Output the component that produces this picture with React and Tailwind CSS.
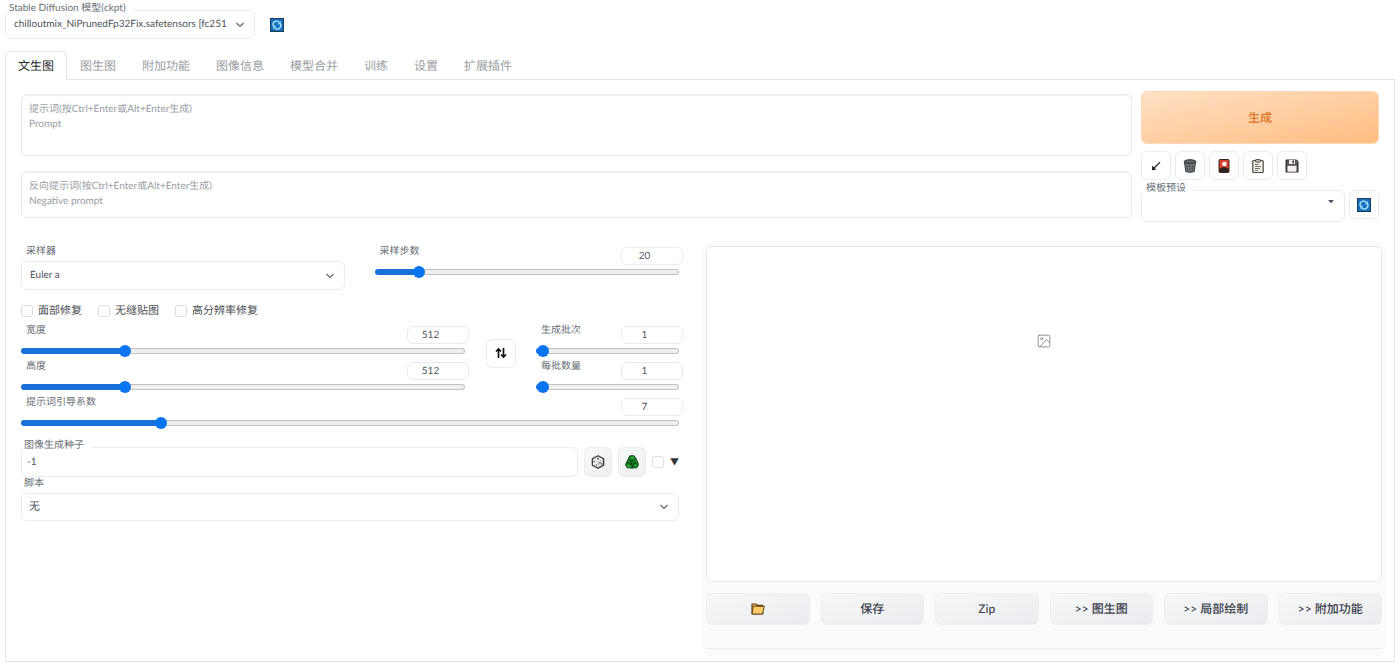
import { useState } from "react";

const TABS = ["文生图", "图生图", "附加功能", "图像信息", "模型合并", "训练", "设置", "扩展插件"];

function Chevron() {
  return (
    <svg viewBox="0 0 10 10" className="pointer-events-none absolute top-1/2 right-2.5 size-2.5 -translate-y-1/2" fill="none" stroke="#62666c" strokeWidth="1.200">
      <path d="M1.500 3L5 6.500 8.500 3" />
    </svg>
  );
}

function Caret() {
  return (
    <svg viewBox="0 0 8 8" className="pointer-events-none absolute top-2 right-2.5 size-2" fill="#4b5563">
      <path d="M1 2h6L4 5.200z" />
    </svg>
  );
}

function RefreshIcon() {
  return (
    <svg viewBox="0 0 14 14" className="size-3.5">
      <rect x="0.500" y="0.500" width="13" height="13" fill="#1470bd" stroke="#1d3a55" />
      <g fill="none" stroke="#9fdcff" strokeWidth="1.500">
        <path d="M3.600 8.300A3.500 3.500 0 0 1 9.300 4.300" />
        <path d="M10.400 5.700A3.500 3.500 0 0 1 4.700 9.700" />
      </g>
      <path d="M10.800 2.800v3.400H7.600zM3.200 11.200V7.800h3.200z" fill="#9fdcff" />
    </svg>
  );
}

function ArrowIcon() {
  return (
    <svg viewBox="0 0 14 14" className="size-3.5">
      <path d="M11 3.200L5.200 9" stroke="#222" strokeWidth="1.200" fill="none" />
      <path d="M3.200 6.600l4.200 4.200-4.500.4z" fill="#222" />
    </svg>
  );
}

function TrashIcon() {
  return (
    <svg viewBox="0 0 14 14" className="size-3.5">
      <path d="M1.500 3l1.300 9.600q4.200 1.500 8.400 0L12.500 3z" fill="#7d8587" stroke="#2f3436" />
      <path d="M4 5l.8 7.500M7 5v8M10 5l-.8 7.500M2.500 7.500h9M3 10h8" stroke="#434a4c" strokeWidth="0.700" />
      <ellipse cx="7" cy="2.600" rx="5.800" ry="1.900" fill="#5d6567" stroke="#2f3436" />
    </svg>
  );
}

function CardIcon() {
  return (
    <svg viewBox="0 0 14 14" className="size-3.5">
      <rect x="2" y="0.500" width="10" height="13" rx="1" fill="#d9432f" stroke="#49201c" />
      <path d="M2.500 9.500Q7 6.500 11.500 9.500V13h-9z" fill="#2a2324" />
      <circle cx="7.500" cy="5" r="2.300" fill="#fff1e8" />
    </svg>
  );
}

function ClipboardIcon() {
  return (
    <svg viewBox="0 0 14 14" className="size-3.5">
      <rect x="1.800" y="1.500" width="10.400" height="12" rx="1" fill="#f2efe6" stroke="#4a4844" strokeWidth="1.200" />
      <rect x="4.500" y="0.500" width="5" height="2.600" rx="0.600" fill="#b8b5ae" stroke="#3c3a36" strokeWidth="0.800" />
      <path d="M4 5.500h3.500M4 7.500h6M4 9.500h5M4 11.300h3" stroke="#66635d" strokeWidth="0.900" />
    </svg>
  );
}

function FloppyIcon() {
  return (
    <svg viewBox="0 0 14 14" className="size-3.5">
      <path d="M1 1h10.500L13 2.500V13H1z" fill="#5b5558" stroke="#2a2628" />
      <rect x="4" y="1" width="6" height="4" fill="#eceaea" />
      <rect x="7.500" y="1.500" width="1.500" height="2.800" fill="#3b3638" />
      <rect x="2.500" y="6.800" width="9" height="5.900" fill="#f6f1f2" />
    </svg>
  );
}

function DiceIcon() {
  return (
    <svg viewBox="0 0 14 14" className="size-3.5" strokeLinejoin="round">
      <path d="M7 .8l5.700 3v6.400L7 13.200l-5.700-3V3.800z" fill="#f4f4f4" />
      <path d="M7 7l5.500-3v6L7 13z" fill="#d8d8d8" />
      <path d="M1.500 4L7 7l5.500-3M7 7v6" fill="none" stroke="#b5b5b5" strokeWidth="0.700" />
      <path d="M7 .8l5.700 3v6.400L7 13.200l-5.700-3V3.800z" fill="none" stroke="#2d2d2d" strokeWidth="1.200" />
      <g fill="#333">
        <circle cx="7" cy="3.700" r="0.900" />
        <circle cx="3.200" cy="6.800" r="0.700" />
        <circle cx="5.200" cy="10" r="0.700" />
        <circle cx="9" cy="8" r="0.700" />
        <circle cx="11" cy="9" r="0.700" />
      </g>
    </svg>
  );
}

function RecycleIcon() {
  return (
    <svg viewBox="0 0 14 14" className="size-3.5" strokeLinejoin="round">
      <path d="M4.800.8h4.400l2 3.200 2.300 5.600-1.700 3.200H8l-1 .7-1-.7H2.200L.5 9.600 2.500 5.500z" fill="#1a8526" stroke="#0a4511" strokeWidth="1" />
      <path d="M4.300 4.800L7 6.300l3.200-2.600M7 6.300L6 9.400l2 1.400M2.200 7.200l3.800 2.200M8 12.500V9.200l3.500-1.600" fill="none" stroke="#08380e" strokeWidth="1" />
      <path d="M6 2.400h2.300l.9 1.400M2.300 10.200l1 1.200h1.800M10.600 9.800l-.8 1.500" fill="none" stroke="#35b545" strokeWidth="1.200" />
    </svg>
  );
}

function FolderIcon() {
  return (
    <svg viewBox="0 0 14 12" className="h-3 w-3.5" strokeLinejoin="round" stroke="#5a3f16" strokeWidth="1.200">
      <path d="M1 11V1h4l1.200 1.300h5.600V11z" fill="#f0b552" />
      <path d="M1.200 11L2.200 3.300h11.200L11.500 11z" fill="#fbcb6a" strokeWidth="0.900" />
    </svg>
  );
}

function SwapIcon() {
  return (
    <svg viewBox="0 0 12 12" className="size-3" fill="none" stroke="#111" strokeWidth="1.700">
      <path d="M3.500 11V2M1 4.500L3.500 2 6 4.500" />
      <path d="M8.500 1v9M6 7.500L8.500 10 11 7.500" />
    </svg>
  );
}

function ImageIcon() {
  return (
    <svg viewBox="0 0 24 24" className="size-3.5" fill="none" stroke="#8d9096" strokeWidth="1.700" strokeLinecap="round" strokeLinejoin="round">
      <rect x="2" y="2" width="20" height="20" rx="2" />
      <circle cx="8" cy="8" r="1.800" />
      <path d="M22 15l-5.500-5.500L4.500 22" />
    </svg>
  );
}

function Slider({ id, label, min, max, initial }) {
  const [value, setValue] = useState(initial);
  const ratio = (value - min) / (max - min);
  const stop = `calc(6px + (100% - 12px) * ${ratio})`;
  const track = `linear-gradient(to right, #1a6fd8 ${stop}, transparent ${stop}) border-box, linear-gradient(#efefef, #efefef) padding-box, linear-gradient(#c2c2c2, #c2c2c2) border-box`;
  const change = (e) => setValue(Number(e.target.value));
  return (
    <div>
      <div className="flex items-start justify-between pl-[5px]">
        <label htmlFor={id} className="leading-[10px] text-[#6b6f76]">{label}</label>
        <input
          type="number"
          aria-label={label}
          value={value}
          onChange={change}
          className="mt-px h-[18px] w-[62px] rounded-md border border-[#ebebed] bg-white pb-px text-center leading-[15px] text-[#55585e]"
        />
      </div>
      <div className="mt-px mr-1 flex">
        <input
          id={id}
          type="range"
          min={min}
          max={max}
          value={value}
          onChange={change}
          style={{ "--track": track }}
          className="h-3 w-full appearance-none bg-transparent [&::-webkit-slider-runnable-track]:h-[6px] [&::-webkit-slider-runnable-track]:rounded-full [&::-webkit-slider-runnable-track]:border [&::-webkit-slider-runnable-track]:border-transparent [&::-webkit-slider-runnable-track]:[background:var(--track)] [&::-webkit-slider-thumb]:-mt-1 [&::-webkit-slider-thumb]:size-3 [&::-webkit-slider-thumb]:appearance-none [&::-webkit-slider-thumb]:rounded-full [&::-webkit-slider-thumb]:bg-[#0a75f0]"
        />
      </div>
    </div>
  );
}

const CHECKBOX =
  "size-3 appearance-none rounded-[3px] border border-[#dddee1] bg-white checked:bg-[#0a75f0]";

function Check({ label }) {
  return (
    <label className="flex items-center gap-[5px] text-[11px] leading-4 text-[#4b4e54]">
      <input type="checkbox" className={CHECKBOX} />
      {label}
    </label>
  );
}

function ToolButton({ label, children }) {
  return (
    <button aria-label={label} className="flex h-[29px] w-[30px] items-center justify-center rounded-md border border-[#ececee] bg-white">
      {children}
    </button>
  );
}

function SeedButton({ label, children }) {
  return (
    <button aria-label={label} className="flex h-[30px] w-7 items-center justify-center rounded-md border border-[#ececee] bg-linear-to-br from-[#f8f9fa] to-[#eeeff1]">
      {children}
    </button>
  );
}

function ActionButton({ label, children }) {
  return (
    <button aria-label={label} className="flex h-8 items-center justify-center rounded-md border border-[#eceef0] bg-linear-to-br from-[#f6f7f9] to-[#ebecef] text-xs font-medium text-[#3a3f4a]">
      {children}
    </button>
  );
}

const FIELD = "w-full appearance-none rounded-md border border-[#ebecee] bg-white text-[#50535a]";
const FLOAT_LABEL = "absolute -top-[7px] z-10 bg-white pr-2 leading-[10px] text-[#6b6f76]";
const PROMPT =
  "block w-full resize-none rounded-md border border-[#e9eaec] bg-white px-[7px] py-[7px] leading-[15px] inset-shadow-2xs placeholder:text-[#9a9da3]";

export default function App() {
  const [tab, setTab] = useState(0);
  return (
    <main className="bg-white px-[5px] pt-2.5 pb-1 font-['Lato','Noto_Sans_CJK_SC',sans-serif] text-[10px] **:[text-rendering:geometricPrecision]">
      <header className="flex items-center gap-[15px]">
        <div className="relative w-[250px]">
          <label htmlFor="model" className={`${FLOAT_LABEL} left-1`}>Stable Diffusion 模型(ckpt)</label>
          <select id="model" className={`${FIELD} h-[29px] pr-5 pl-2`}>
            <option>chilloutmix_NiPrunedFp32Fix.safetensors [fc251</option>
          </select>
          <Chevron />
        </div>
        <button aria-label="刷新模型"><RefreshIcon /></button>
      </header>

      <nav className="relative mt-3 -mb-px flex">
        {TABS.map((name, i) => (
          <button
            key={name}
            onClick={() => setTab(i)}
            className={
              i === tab
                ? "h-[29px] rounded-t-md border border-b-0 border-[#e2e3e5] bg-white px-3 text-xs text-[#26282c]"
                : "h-[29px] border border-b-0 border-transparent px-3 text-xs text-[#9b9ea4]"
            }
          >
            {name}
          </button>
        ))}
      </nav>

      <section className="border border-[#e2e3e5] pt-[11px] pr-2 pb-1.5 pl-[15px]">
        <div className="mr-[7px] grid grid-cols-[1fr_238px] gap-[9px]">
          <div className="flex flex-col gap-[15px] pt-[3px]">
            <textarea aria-label="提示词" className={`${PROMPT} h-[62px]`} placeholder={"提示词(按Ctrl+Enter或Alt+Enter生成)\nPrompt"} />
            <textarea aria-label="反向提示词" className={`${PROMPT} h-[47px]`} placeholder={"反向提示词(按Ctrl+Enter或Alt+Enter生成)\nNegative prompt"} />
          </div>
          <div>
            <button className="block h-[53px] w-full rounded-md border border-[#ffd9b5] bg-linear-to-br from-[#ffe0c4] to-[#ffbd80] text-xs font-medium text-[#dd7420]">
              生成
            </button>
            <div className="mt-[7px] flex gap-1">
              <ToolButton label="读取参数"><ArrowIcon /></ToolButton>
              <ToolButton label="清空提示词"><TrashIcon /></ToolButton>
              <ToolButton label="附加网络"><CardIcon /></ToolButton>
              <ToolButton label="应用预设"><ClipboardIcon /></ToolButton>
              <ToolButton label="保存预设"><FloppyIcon /></ToolButton>
            </div>
            <div className="mt-2.5 flex gap-1">
              <div className="relative grow">
                <label htmlFor="preset" className={`${FLOAT_LABEL} left-[5px]`}>模板预设</label>
                <select id="preset" className={`${FIELD} block h-8 px-2`}>
                  <option></option>
                </select>
                <Caret />
              </div>
              <ToolButton label="刷新预设"><RefreshIcon /></ToolButton>
            </div>
          </div>
        </div>

        <div className="mt-5 grid grid-cols-[662fr_684fr] gap-[19px]">
          <div className="pt-1">
            <div className="grid grid-cols-[323fr_308fr] gap-[30px]">
              <div>
                <label htmlFor="sampler" className="block pl-[5px] leading-[10px] text-[#6b6f76]">采样器</label>
                <div className="relative mt-[5px]">
                  <select id="sampler" className={`${FIELD} block h-[29px] px-2`}>
                    <option>Euler a</option>
                  </select>
                  <Chevron />
                </div>
              </div>
              <Slider id="steps" label="采样步数" min={1} max={150} initial={20} />
            </div>

            <div className="mt-[13px] flex gap-4">
              <Check label="面部修复" />
              <Check label="无缝贴图" />
              <Check label="高分辨率修复" />
            </div>

            <div className="mt-1.5 flex items-center">
              <div className="flex grow flex-col gap-1">
                <Slider id="width" label="宽度" min={64} max={2048} initial={512} />
                <Slider id="height" label="高度" min={64} max={2048} initial={512} />
              </div>
              <div className="mr-5 ml-[17px] -mt-3">
                <ToolButton label="交换宽高"><SwapIcon /></ToolButton>
              </div>
              <div className="flex w-[147px] flex-col gap-1">
                <Slider id="batch-count" label="生成批次" min={1} max={100} initial={1} />
                <Slider id="batch-size" label="每批数量" min={1} max={8} initial={1} />
              </div>
            </div>
            <div className="mt-1">
              <Slider id="cfg" label="提示词引导系数" min={1} max={30} initial={7} />
            </div>

            <div className="mt-[18px] mr-1 flex items-center gap-1.5">
              <div className="relative grow">
                <label htmlFor="seed" className={`${FLOAT_LABEL} left-[3px]`}>图像生成种子</label>
                <input id="seed" defaultValue="-1" className={`${FIELD} block h-[30px] px-[5px]`} />
              </div>
              <SeedButton label="随机种子"><DiceIcon /></SeedButton>
              <SeedButton label="重用种子"><RecycleIcon /></SeedButton>
              <label className="flex items-center gap-1.5 text-[9px] text-[#33363b]">
                <input type="checkbox" className={CHECKBOX} />
                ▼
              </label>
            </div>

            <label htmlFor="script" className="mt-px block pl-[3px] leading-[10px] text-[#6b6f76]">脚本</label>
            <div className="relative mt-[5px] mr-1">
              <select id="script" className={`${FIELD} block h-7 px-[7px] text-[11px]`}>
                <option>无</option>
              </select>
              <Chevron />
            </div>
          </div>

          <div className="rounded-md bg-[#fafbfc] px-1 pt-1 pb-1.5">
            <div className="flex h-[336px] justify-center rounded-md border border-[#e5e7eb] bg-white pt-[87px]">
              <ImageIcon />
            </div>
            <div className="mt-[11px] grid grid-cols-6 gap-[11px]">
              <ActionButton label="打开文件夹"><FolderIcon /></ActionButton>
              <ActionButton>保存</ActionButton>
              <ActionButton>Zip</ActionButton>
              <ActionButton>&gt;&gt; 图生图</ActionButton>
              <ActionButton>&gt;&gt; 局部绘制</ActionButton>
              <ActionButton>&gt;&gt; 附加功能</ActionButton>
            </div>
            <hr className="mt-[23px] border-[#eceef1]" />
          </div>
        </div>
      </section>
    </main>
  );
}
